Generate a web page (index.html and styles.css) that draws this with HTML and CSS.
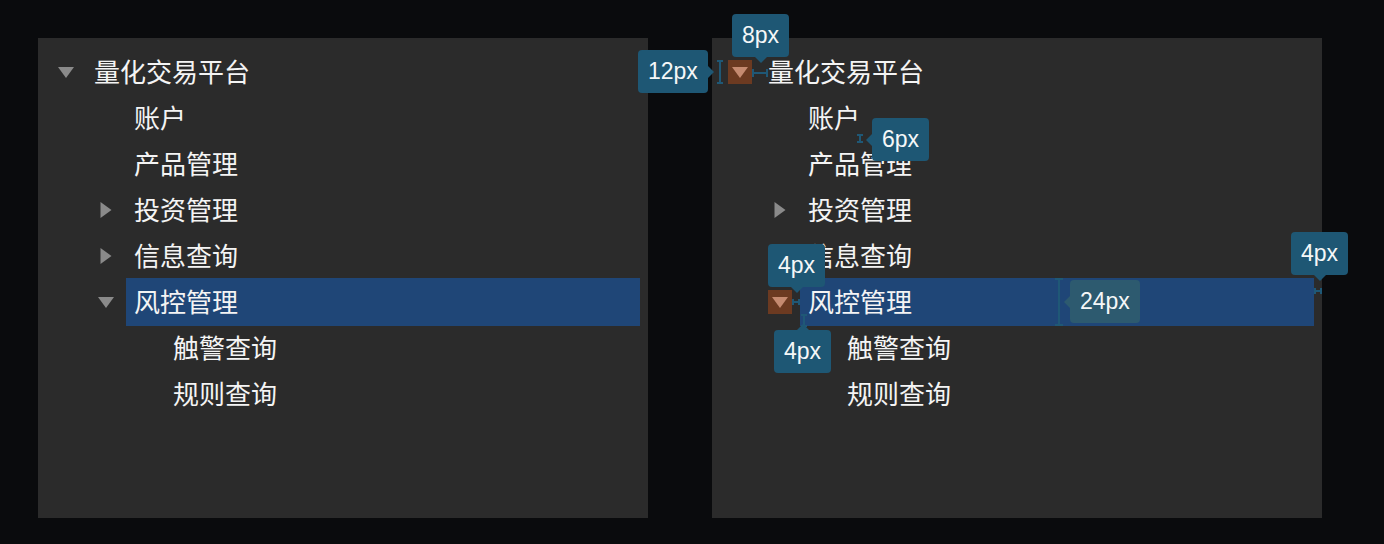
FILE: index.html
```html
<!DOCTYPE html>
<html lang="zh">
<head>
<meta charset="utf-8">
<link rel="stylesheet" href="styles.css">
</head>
<body>
<div class="stage">
  <div class="panel">
    <ul class="tree">
      <li class="row l0"><span class="arrow"><svg viewBox="0 0 24 24"><polygon points="4,7 20,7 12,18"/></svg></span><span class="label">量化交易平台</span></li>
      <li class="row l1"><span class="arrow"></span><span class="label">账户</span></li>
      <li class="row l1"><span class="arrow"></span><span class="label">产品管理</span></li>
      <li class="row l1"><span class="arrow"><svg viewBox="0 0 24 24"><polygon points="6.5,4 17.5,12 6.5,20"/></svg></span><span class="label">投资管理</span></li>
      <li class="row l1"><span class="arrow"><svg viewBox="0 0 24 24"><polygon points="6.5,4 17.5,12 6.5,20"/></svg></span><span class="label">信息查询</span></li>
      <li class="row l1 selected"><span class="arrow"><svg viewBox="0 0 24 24"><polygon points="4,7 20,7 12,18"/></svg></span><span class="label">风控管理</span></li>
      <li class="row l2"><span class="arrow"></span><span class="label">触警查询</span></li>
      <li class="row l2"><span class="arrow"></span><span class="label">规则查询</span></li>
    </ul>
  </div>
  <div class="panel">
    <ul class="tree">
      <li class="row l0"><span class="arrow hl"><svg viewBox="0 0 24 24"><polygon points="4,7 20,7 12,18"/></svg></span><span class="label">量化交易平台</span></li>
      <li class="row l1"><span class="arrow"></span><span class="label">账户</span></li>
      <li class="row l1"><span class="arrow"></span><span class="label">产品管理</span></li>
      <li class="row l1"><span class="arrow"><svg viewBox="0 0 24 24"><polygon points="6.5,4 17.5,12 6.5,20"/></svg></span><span class="label">投资管理</span></li>
      <li class="row l1"><span class="arrow"><svg viewBox="0 0 24 24"><polygon points="6.5,4 17.5,12 6.5,20"/></svg></span><span class="label">信息查询</span></li>
      <li class="row l1 selected"><span class="arrow hl"><svg viewBox="0 0 24 24"><polygon points="4,7 20,7 12,18"/></svg></span><span class="label">风控管理</span></li>
      <li class="row l2"><span class="arrow"></span><span class="label">触警查询</span></li>
      <li class="row l2"><span class="arrow"></span><span class="label">规则查询</span></li>
    </ul>
  </div>

  <svg class="measure" width="1384" height="544" viewBox="0 0 1384 544">
    <g stroke="#1f5876" stroke-width="2" fill="none">
      <path d="M720 60 V84 M717 61 H723 M717 83 H723"/>
      <path d="M753 73 H767 M753 69 V77 M767 69 V77"/>
      <path d="M860 135 V142 M857 135 H863 M857 142 H863"/>
      <path d="M793 302 H799 M793 299 V305 M799 299 V305"/>
      <path d="M804 315 V326 M801 315 H807 M801 326 H807"/>
      <path d="M1059 279 V325 M1055 279 H1063 M1055 325 H1063"/>
      <path d="M1315 291 H1321 M1315 288 V294 M1321 288 V294"/>
    </g>
  </svg>

  <div class="tip down" style="left:732px;top:14px">8px</div>
  <div class="tip right" style="left:638px;top:50px">12px</div>
  <div class="tip left" style="left:872px;top:118px">6px</div>
  <div class="tip down" style="left:768px;top:244px">4px</div>
  <div class="tip up" style="left:774px;top:330px">4px</div>
  <div class="tip left soft" style="left:1070px;top:280px">24px</div>
  <div class="tip down" style="left:1291px;top:232px">4px</div>
</div>
</body>
</html>
```

FILE: styles.css
```css
* { box-sizing: border-box; }
html, body { margin: 0; padding: 0; }
body {
  background: #0a0b0d;
  width: 1384px;
  height: 544px;
  overflow: hidden;
  font-family: "Noto Sans CJK SC", "Noto Sans", sans-serif;
}
.stage {
  position: relative;
  width: 1384px;
  height: 544px;
  padding: 38px;
  display: flex;
  gap: 64px;
}
.panel {
  width: 610px;
  height: 480px;
  background: #2b2b2b;
}
.tree {
  list-style: none;
  margin: 0;
  padding: 11px 8px 0 0;
}
.row {
  height: 46px;
  display: flex;
  align-items: center;
  gap: 8px;
  color: #f4f4f4;
  font-size: 26px;
}
.row.l0 { padding-left: 16px; }
.row.l1 { padding-left: 56px; }
.row.l2 { padding-left: 95px; }
.arrow {
  width: 24px;
  height: 24px;
  flex: none;
  display: flex;
}
.arrow svg { width: 24px; height: 24px; fill: #8a8a8a; }
.arrow.hl { background: #6c3a21; }
.arrow.hl svg { fill: #c58a70; }
.label {
  flex: 1;
  height: 48px;
  line-height: 46px;
  padding: 0 8px;
  white-space: nowrap;
}
.selected .label { background: #1f4677; }

.measure {
  position: absolute;
  left: 0;
  top: 0;
  pointer-events: none;
}
.tip {
  position: absolute;
  height: 43px;
  line-height: 43px;
  padding: 0 10px;
  background: #1e5774;
  color: #f5f7f8;
  font-family: "Liberation Sans", Arial, sans-serif;
  font-size: 23px;
  border-radius: 4px;
}
.tip.soft { background: #2d5a6f; }
.tip::after {
  content: "";
  position: absolute;
  border: 6px solid transparent;
}
.tip.down::after { top: 100%; left: 50%; margin-left: -6px; border-top-color: #1e5774; }
.tip.up::after { bottom: 100%; left: 50%; margin-left: -6px; border-bottom-color: #1e5774; }
.tip.right::after { left: 100%; top: 50%; margin-top: -6px; border-left-color: #1e5774; }
.tip.left::after { right: 100%; top: 50%; margin-top: -6px; border-right-color: #1e5774; }
.tip.soft::after { border-right-color: #2d5a6f; }
```
